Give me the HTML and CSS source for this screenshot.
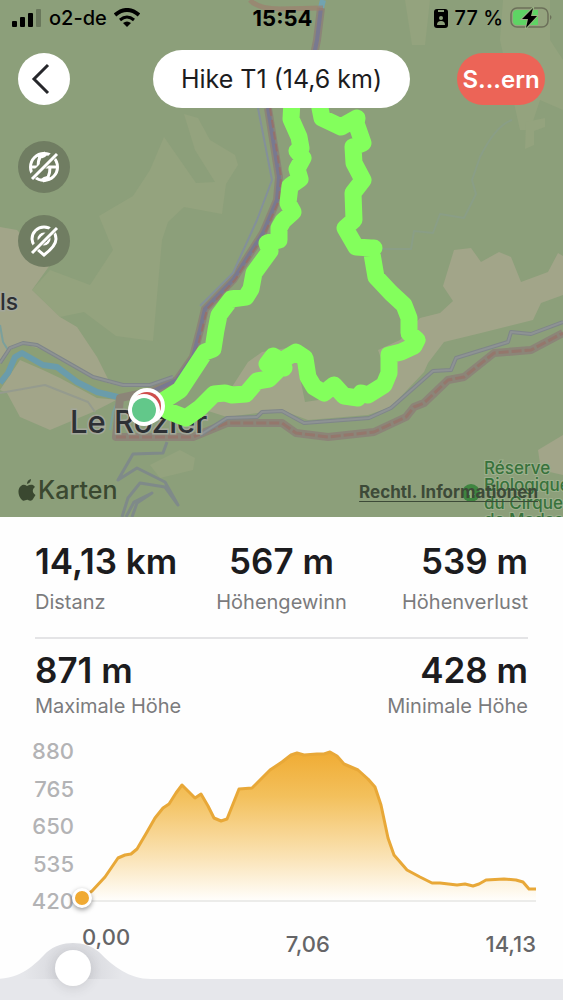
FILE: index.html
```html
<!DOCTYPE html>
<html lang="de">
<head>
    <meta charset="UTF-8">
    <meta name="viewport" content="width=device-width, initial-scale=1.0">
    <title>Hike T1</title>
    <link rel="stylesheet" href="styles.css">
</head>
<body>
    <section class="map">
        <!-- Karte -->
        <svg class="map-canvas" viewBox="0 0 563 517" preserveAspectRatio="xMidYMid slice">
            <rect width="563" height="517" fill="#8c9f7a"/>
            <g fill="#94a37e">
                <path d="M164 137L150 170L133 196L99 216L113 250L90 285L50 270L32 290L60 317L84 312L116 336L153 341L162 240L168 222L184 207L222 214L226 184L238 165L235 155L210 140L198 118L184 114L195 150L215 182L196 183Z"/>
                <path d="M503 0H550V40L563 60V110L540 100L530 130H520L500 40Z"/>
                <path d="M405 0H430L425 45H412Z"/>
                <path d="M526 122L545 118V127L534 131V145L525 149Z"/>
                <path d="M180 450L195 458L193 470L160 478L150 465Z"/>
            </g>
            <g fill="#a2a589">
                <path d="M0 227L17 230L50 265L32 290L60 317L77 327L97 357L110 383L122 397L93 412L50 430L20 417L7 393L0 390Z"/>
                <path d="M454 250L471 248L481 262L499 252L511 257L521 282L548 272L558 253L563 256V295L541 303L533 320L481 333L444 342L428 363L424 372L391 407L368 415L308 420L281 410L227 417L205 410L230 390L248 362L262 352L300 346L310 385L330 390L370 392L385 370L378 350L400 340L420 318L440 313L453 301L443 286Z"/>
                <path d="M563 435L538 450L541 470L563 475Z"/>
            </g>
            <path d="M297 363L305 402L325 399L310 385Z" fill="#8c9f7a"/>
            <path d="M0 363L10 350L23 344L45 350L93 378L123 388H165L120 400L97 398L60 378L43 370L20 360L0 390Z" fill="#8c9f76"/>

            <path d="M0 383L8 373L15 357L22 353L43 365L57 367L77 382L97 392L122 398" fill="none" stroke="#6a9cab" stroke-width="6" stroke-linejoin="round"/>
            <path d="M0 325L3 342L8 350M118 400L113 412L110 430" fill="none" stroke="#7ba09c" stroke-width="2"/>
            <path d="M323 0L321 8" fill="none" stroke="#72a3b0" stroke-width="6"/>

            <g fill="none" stroke-linejoin="round">
                <path d="M321 8L317 40L306 95M268 108L279 177L277 200L263 233L233 280L205 309L200 330L193 357L177 380L153 391L120 398L116 437H193L227 423H282L296 433L328 437L374 432L406 417L414 407L424 403L448 380L464 377L494 353L531 350L563 333" stroke="#8c8578" stroke-width="8"/>
                <path d="M321 8L317 40L306 95M268 108L279 177L277 200L263 233L233 280L205 309L200 330L193 357L177 380L153 391" stroke="#797990" stroke-width="4"/>
                <path d="M116 437H193L227 423H282L296 433L328 437L374 432L406 417L414 407L424 403L448 380L464 377L494 353L531 350L563 333" stroke="#94776c" stroke-width="3" stroke-dasharray="10 3"/>
                <path d="M270 108L281 177L279 200L265 233L235 280L207 309L202 330L195 357L179 380" stroke="#94716c" stroke-width="2" stroke-dasharray="8 4"/>
                <path d="M250 0Q258 9 280 9L323 8" stroke="#9c806f" stroke-width="5" opacity=".7"/>
                <path d="M258 108L272 180L257 220L233 273L200 306" stroke="#84909a" stroke-width="2"/>
                <path d="M0 363L10 348L23 343L37 345L93 377L123 385H150L173 377M200 435L227 418L257 417L262 412L282 411L304 423L369 418L391 408L433 371L451 370L456 358L508 342L511 332L531 334L563 322" stroke="#7f8689" stroke-width="4"/>
                <path d="M0 363L10 348L23 343L37 345L93 377L123 385H150L173 377M200 435L227 418L257 417L262 412L282 411L304 423L369 418L391 408L433 371L451 370L456 358L508 342L511 332L531 334L563 322" stroke="#8e9394" stroke-width="2"/>
                <path d="M167 442L163 453L133 454L118 480L137 468L165 482L178 505L165 487L140 483L128 498L122 517M132 517L137 503L152 493L134 502L126 517" stroke="#7f8a89" stroke-width="3"/>
                <path d="M0 393L45 385L88 402L95 412" stroke="#959b8e" stroke-width="2"/>
                <path d="M512 120Q496 125 480 157L472 180L476 194L464 218L440 214L433 233L414 231L411 249H375" stroke="#8a9e86" stroke-width="2"/>
            </g>

            <!-- Ortsnamen -->
            <text class="place" x="70" y="433">Le Rozier</text>
            <text class="place place-small" x="0" y="310">ls</text>
            <circle cx="471" cy="493" r="9" fill="#3f8540"/>
            <path d="M471 488L475 495H472V498H470V495H467Z" fill="#8cb07e"/>
            <text class="reserve">
                <tspan x="484" y="474">Réserve</tspan>
                <tspan x="484" y="491">Biologique</tspan>
                <tspan x="484" y="509">du Cirque</tspan>
                <tspan x="484" y="526">de Madasse</tspan>
            </text>

            <!-- Route -->
            <path class="track" d="M292 100L291 119L299 137L301 148L297 151L303 158L297 169L300 179L290 186L288 203L293 212L283 221L279 228L279 240L267 243L270 251L254 273L251 289L246 297L231 299L219 315L216 330L213 349L205 352L180 390L160 403L168 411L186 418L200 408L214 394L225 393L232 395L246 394L257 381L269 379L277 371L267 364L273 356L281 361L296 352L305 358L308 377L314 387L324 393L334 385L344 396L358 398L361 393L368 395L384 385L389 373L389 355L401 352L414 346L417 340L409 333L409 318L404 305L391 293L376 277L371 248L356 247L345 228L354 220L353 193L363 180L354 163L353 147L363 143L356 123L357 118L341 127L322 118L319 103M371 248H374M273 362L284 368"/>
            <circle cx="147" cy="406" r="18" fill="#fff"/>
            <circle cx="147" cy="406" r="14" fill="#cf4d4b"/>
            <circle cx="144" cy="410" r="16" fill="#fff"/>
            <circle cx="144" cy="410" r="12" fill="#62c88a"/>
        </svg>

        <div class="status">
            <div class="status-left">
                <svg width="30" height="20" viewBox="0 0 30 20">
                    <rect x="0" y="13" width="5" height="6" rx="1"/>
                    <rect x="8" y="9" width="5" height="10" rx="1"/>
                    <rect x="16" y="5" width="5" height="14" rx="1"/>
                    <rect x="24" y="1" width="5" height="18" rx="1" opacity=".25"/>
                </svg>
                <span>o2-de</span>
                <svg width="26" height="20" viewBox="0 0 26 20" fill="none" stroke="#000" stroke-width="4">
                    <path d="M1 7Q13 -3 25 7"/>
                    <path d="M6 12Q13 6 20 12" stroke-width="3"/>
                    <path d="M13 19L9 15Q13 12 17 15Z" fill="#000" stroke="none"/>
                </svg>
            </div>
            <span class="clock">15:54</span>
            <div class="status-right">
                <svg width="14" height="19" viewBox="0 0 14 19">
                    <rect width="14" height="19" rx="3"/>
                    <path d="M4 2H10" stroke="#8c9f7a" stroke-width="2"/>
                    <circle cx="7" cy="9" r="2" fill="#8c9f7a"/>
                    <path d="M3 16Q3 12 7 12Q11 12 11 16Z" fill="#8c9f7a"/>
                </svg>
                <span>77 %</span>
                <svg width="43" height="22" viewBox="0 0 43 22">
                    <rect x="1" y="1" width="37" height="19" rx="6" fill="none" stroke="#6c705a" stroke-width="1.5"/>
                    <path d="M7 3H28V18H7Q3 18 3 14V7Q3 3 7 3Z" fill="#5ed464"/>
                    <path d="M40 8Q43 10 40 13Z" fill="#6c705a"/>
                    <path d="M23 1L12 12H18L16 21L27 9H21Z" stroke="#99b382" stroke-width="2" paint-order="stroke"/>
                </svg>
            </div>
        </div>

        <header class="topbar">
            <button class="back" type="button" aria-label="Zurück">
                <svg width="20" height="32" viewBox="0 0 20 32" fill="none" stroke="#26272b" stroke-width="3">
                    <path d="M17 2L3 16L17 30"/>
                </svg>
            </button>
            <h1 class="title">Hike T1 (14,6 km)</h1>
            <button class="save" type="button">S...ern</button>
        </header>

        <div class="map-tools">
            <button type="button" aria-label="Satellitenkarte aus">
                <svg width="32" height="32" viewBox="0 0 32 32" fill="none" stroke="#fff" stroke-width="3">
                    <circle cx="16" cy="16" r="13.5"/>
                    <path d="M3 16H29M17 2Q10 4 10 16M15 30Q22 28 22 16M10 4Q14 8 18 3M14 29Q18 25 22 28"/>
                    <path d="M2 28L28 2" stroke="#707d62" stroke-width="7"/>
                    <path d="M4 28L29 3"/>
                </svg>
            </button>
            <button type="button" aria-label="Wegpunkte aus">
                <svg width="32" height="32" viewBox="0 0 32 32" fill="none" stroke="#fff" stroke-width="3">
                    <path d="M16 30Q4 21 4 14A12 12 0 0 1 28 14Q28 21 16 30Z"/>
                    <circle cx="16" cy="14" r="5"/>
                    <path d="M2 28L28 2" stroke="#707d62" stroke-width="7"/>
                    <path d="M4 28L29 3"/>
                </svg>
            </button>
        </div>

        <div class="map-credits">
            <span class="brand">
                <svg width="18" height="22" viewBox="0 0 18 22" fill="#3a4830">
                    <path d="M9 7C7 6 5 5 3 7C-1 10 0 17 4 21C6 23 8 20 10 21C12 22 14 22 15 20L17.500 16C14 14 14 10 17 8C15 5 12 5.500 9 7Z"/>
                    <path d="M9 5Q9 1 13 0Q13 4 9 5Z"/>
                </svg>
                Karten
            </span>
            <a class="legal" href="#">Rechtl. Informationen</a>
        </div>
    </section>

    <main class="details">
        <dl class="stats">
            <div class="stat">
                <dt>Distanz</dt>
                <dd>14,13 km</dd>
            </div>
            <div class="stat">
                <dt>Höhengewinn</dt>
                <dd>567 m</dd>
            </div>
            <div class="stat">
                <dt>Höhenverlust</dt>
                <dd>539 m</dd>
            </div>
        </dl>
        <dl class="stats stats-height">
            <div class="stat">
                <dt>Maximale Höhe</dt>
                <dd>871 m</dd>
            </div>
            <div class="stat">
                <dt>Minimale Höhe</dt>
                <dd>428 m</dd>
            </div>
        </dl>

        <!-- Höhenprofil -->
        <div class="chart">
            <div class="y-axis">
                <span>880</span>
                <span>765</span>
                <span>650</span>
                <span>535</span>
                <span>420</span>
            </div>
            <div class="plot">
                <svg viewBox="82 739 454 174" preserveAspectRatio="none">
                    <defs>
                        <linearGradient id="fill" x1="0" y1="0" x2="0" y2="1">
                            <stop offset="0" stop-color="#f0ac34"/>
                            <stop offset=".3" stop-color="#f3c05c"/>
                            <stop offset=".7" stop-color="#fae2b3"/>
                            <stop offset="1" stop-color="#fffefb"/>
                        </linearGradient>
                    </defs>
                    <path d="M82 901H536" stroke="#ececea" stroke-width="2"/>
                    <path fill="url(#fill)" d="M82 898L92 891L105 877L118 858L125 855L131 854L137 849L147 832L155 818L163 808L169 804L176 793L182 785L195 798L201 794L208 806L214 818L221 821L227 819L233 804L239 789L252 788L260 780L270 770L282 762L291 755L297 753L304 755L317 754L324 754L330 752L337 756L344 764L358 770L368 779L375 787L381 805L388 838L394 855L407 870L420 877L432 883H440L457 885L465 884L473 886L479 884L486 880L504 879L516 880L523 882L529 889H536V900H82Z"/>
                    <path class="line" d="M82 898L92 891L105 877L118 858L125 855L131 854L137 849L147 832L155 818L163 808L169 804L176 793L182 785L195 798L201 794L208 806L214 818L221 821L227 819L233 804L239 789L252 788L260 780L270 770L282 762L291 755L297 753L304 755L317 754L324 754L330 752L337 756L344 764L358 770L368 779L375 787L381 805L388 838L394 855L407 870L420 877L432 883H440L457 885L465 884L473 886L479 884L486 880L504 879L516 880L523 882L529 889H536"/>
                </svg>
                <span class="marker"></span>
            </div>
            <div class="x-axis">
                <span>0,00</span>
                <span>7,06</span>
                <span>14,13</span>
            </div>
        </div>
    </main>

    <footer class="scrubber">
        <svg class="bump" width="156" height="36" viewBox="0 0 156 36">
            <defs>
                <radialGradient id="shade" gradientUnits="userSpaceOnUse" cx="78" cy="28" r="50">
                    <stop offset="0" stop-color="#d2d3d8"/>
                    <stop offset="1" stop-color="#e6e7eb"/>
                </radialGradient>
            </defs>
            <path d="M0 36C28 36 42 19 52 9C66 -3 90 -3 104 9C118 23 134 36 156 36Z" fill="url(#shade)"/>
        </svg>
        <input class="slider" type="range" min="0" max="1413" value="0" aria-label="Position auf der Strecke">
    </footer>
</body>
</html>
```

FILE: styles.css
```css
* {
    box-sizing: border-box;
}
body {
    margin: 0;
    min-height: 100vh;
    display: flex;
    flex-direction: column;
    font-family: Inter, "Liberation Sans", sans-serif;
    color: #1c1c1e;
    background-color: #fefefe;
}
button {
    padding: 0;
    border: none;
    font-family: inherit;
    cursor: pointer;
    display: flex;
    align-items: center;
    justify-content: center;
}

/* Karte */
.map {
    position: relative;
    flex: 1;
    min-height: 400px;
    display: flex;
    flex-direction: column;
    overflow: hidden;
    background-color: #8c9f7a;
}
.map-canvas {
    position: absolute;
    inset: 0;
    width: 100%;
    height: 100%;
}
.status, .topbar, .map-tools, .map-credits {
    position: relative;
}
.place {
    font-size: 31px;
    font-weight: 500;
    fill: #2d3034;
    stroke: #a3a79a;
    stroke-width: 3px;
    paint-order: stroke;
}
.place-small {
    font-size: 23px;
}
.reserve {
    font-size: 17px;
    font-weight: 500;
    fill: #38723c;
    stroke: #9db08d;
    stroke-width: 2px;
    paint-order: stroke;
}
.track {
    fill: none;
    stroke: #83ff5c;
    stroke-width: 17px;
    stroke-linejoin: round;
    stroke-linecap: round;
}

.status {
    display: grid;
    grid-template-columns: 1fr auto 1fr;
    align-items: center;
    height: 36px;
    padding: 0 10px 0 12px;
    font-size: 20px;
    font-weight: 500;
    color: #000;
}
.status-left, .status-right {
    display: flex;
    align-items: center;
    gap: 7px;
}
.status-right {
    justify-content: flex-end;
}
.clock {
    font-size: 22px;
    font-weight: 700;
}

.topbar {
    display: grid;
    grid-template-columns: 1fr auto 1fr;
    align-items: center;
    padding: 14px 18px 0;
}
.back {
    width: 52px;
    height: 52px;
    border-radius: 50%;
    background-color: #fff;
    padding-right: 6px;
}
.title {
    margin: 0;
    padding: 0 28px;
    font-size: 25px;
    font-weight: 400;
    line-height: 58px;
    border-radius: 29px;
    background-color: #fff;
}
.save {
    justify-self: end;
    width: 88px;
    height: 52px;
    border-radius: 26px;
    background-color: #ec6457;
    color: #fff;
    font-size: 24px;
    font-weight: 600;
}

.map-tools {
    display: flex;
    flex-direction: column;
    gap: 22px;
    padding: 33px 18px;
}
.map-tools button {
    width: 52px;
    height: 52px;
    border-radius: 50%;
    background-color: #707d62;
}

.map-credits {
    margin-top: auto;
    display: flex;
    justify-content: space-between;
    align-items: center;
    padding: 0 25px 10px 18px;
    color: #3a4830;
}
.brand {
    display: flex;
    align-items: center;
    gap: 2px;
    font-size: 25px;
    font-weight: 500;
    line-height: 34px;
}
.legal {
    margin-top: 4px;
    color: #3d4a38;
    font-size: 17px;
    font-weight: 700;
    text-underline-offset: 3px;
}

/* Werte */
.stats {
    display: grid;
    grid-template-columns: 1fr auto 1fr;
    margin: 0 35px;
    padding: 24px 0 22px;
    border-bottom: 2px solid #e4e4e6;
}
.stats-height {
    grid-template-columns: 1fr 1fr;
    padding: 11px 0 20px;
    border-bottom: none;
}
.stat {
    display: flex;
    flex-direction: column-reverse;
    gap: 8px;
    align-items: center;
}
.stats-height .stat {
    gap: 3px;
}
.stat:first-child {
    align-items: flex-start;
}
.stat:last-child {
    align-items: flex-end;
}
.stat dd {
    margin: 0;
    font-size: 35px;
    font-weight: 600;
    line-height: 40px;
}
.stat dt {
    font-size: 20px;
    line-height: 26px;
    color: #7b7b7d;
}

/* Höhenprofil */
.chart {
    display: grid;
    grid-template-columns: 74px 1fr;
    column-gap: 8px;
    padding-right: 27px;
    font-size: 22px;
    font-weight: 500;
    line-height: 24px;
}
.y-axis {
    height: 174px;
    display: flex;
    flex-direction: column;
    justify-content: space-between;
    text-align: right;
    color: #b3b3b5;
}
.plot {
    position: relative;
    height: 174px;
}
.plot svg {
    display: block;
    width: 100%;
    height: 100%;
}
.line {
    fill: none;
    stroke: #e8a838;
    stroke-width: 3px;
    stroke-linejoin: round;
    vector-effect: non-scaling-stroke;
}
.marker {
    position: absolute;
    left: -10px;
    bottom: 5px;
    width: 20px;
    height: 20px;
    border: 3px solid #fff;
    border-radius: 50%;
    background-color: #f0aa33;
    box-shadow: 0 2px 5px rgba(0, 0, 0, 0.4);
}
.x-axis {
    grid-column: 2;
    display: flex;
    justify-content: space-between;
    align-items: flex-end;
    height: 43px;
    margin-bottom: 23px;
    color: #656567;
}
.x-axis span:first-child {
    margin-bottom: 7px;
}

/* Schieberegler */
.scrubber {
    position: relative;
    height: 21px;
    background-color: #e6e7eb;
}
.bump {
    position: absolute;
    left: -5px;
    bottom: 21px;
}
.slider {
    position: absolute;
    left: 55px;
    right: 8px;
    bottom: 14px;
    height: 36px;
    margin: 0;
    appearance: none;
    background: none;
}
.slider::-webkit-slider-thumb {
    appearance: none;
    width: 36px;
    height: 36px;
    border: none;
    border-radius: 50%;
    background-color: #fff;
    box-shadow: 0 2px 12px rgba(60, 60, 70, 0.16);
}
```
